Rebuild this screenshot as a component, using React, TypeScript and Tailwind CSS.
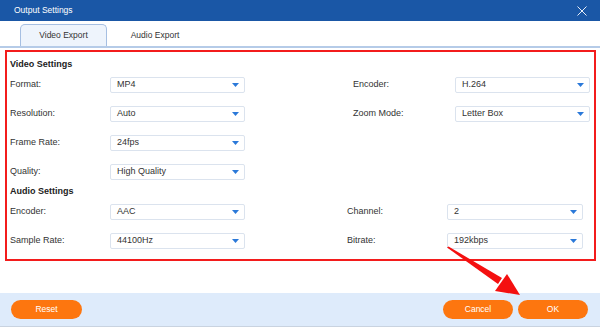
import React from "react";

const font = { fontFamily: '"Liberation Sans", Arial, sans-serif' };

function Select({ value, w }: { value: string; w: string }) {
  return (
    <div
      className={`${w} h-[16px] flex items-center justify-between bg-white border border-[#dbe3ee] rounded-[2px] pl-[6px] pr-[5px] text-[9px] text-[#333]`}
    >
      <span>{value}</span>
      <svg width="7" height="4" viewBox="0 0 7 4">
        <path d="M0 0 L7 0 L3.5 4 Z" fill="#2b79d9" />
      </svg>
    </div>
  );
}

function Label({ text, w }: { text: string; w: string }) {
  return <div className={`${w} text-[9px] text-[#333] shrink-0`}>{text}</div>;
}

export default function App() {
  return (
    <div className="relative w-[600px] h-[327px] flex flex-col bg-white overflow-hidden" style={font}>
      {/* Title bar */}
      <div className="h-[21px] bg-[#1a57a6] flex items-center justify-between pl-[14px] pr-[13px] shrink-0">
        <span className="text-white text-[8.5px]">Output Settings</span>
        <svg width="10" height="10" viewBox="0 0 10 10">
          <path d="M0.5 0.5 L9.5 9.5 M9.5 0.5 L0.5 9.5" stroke="#e8eef8" strokeWidth="1" />
        </svg>
      </div>
      {/* Tabs */}
      <div className="h-[27px] flex items-end pl-[20px] border-b-[2px] border-[#b5cbe8] shrink-0">
        <div className="w-[87px] h-[22px] bg-[#eef4fc] border border-b-0 border-[#a6bfe2] rounded-t-[5px] flex items-center justify-center text-[8.5px] text-[#333]">
          Video Export
        </div>
        <div className="w-[96px] h-[22px] flex items-center justify-center text-[8.5px] text-[#333]">
          Audio Export
        </div>
      </div>
      {/* Red box */}
      <div className="mt-[2px] ml-[5px] w-[591px] border-2 border-[#f31c1c] pl-[3px] pt-[7px] pb-[10px] flex flex-col">
        <div className="h-[12px] flex items-center text-[9px] font-bold text-[#222]">Video Settings</div>
        <div className="mt-[6px] flex flex-col gap-[13px]">
          <div className="h-[16px] flex items-center">
            <Label text="Format:" w="w-[100px]" />
            <Select value="MP4" w="w-[135px]" />
            <div className="w-[108px] shrink-0" />
            <Label text="Encoder:" w="w-[102px]" />
            <Select value="H.264" w="w-[135px]" />
          </div>
          <div className="h-[16px] flex items-center">
            <Label text="Resolution:" w="w-[100px]" />
            <Select value="Auto" w="w-[135px]" />
            <div className="w-[108px] shrink-0" />
            <Label text="Zoom Mode:" w="w-[102px]" />
            <Select value="Letter Box" w="w-[135px]" />
          </div>
          <div className="h-[16px] flex items-center">
            <Label text="Frame Rate:" w="w-[100px]" />
            <Select value="24fps" w="w-[135px]" />
          </div>
          <div className="h-[16px] flex items-center">
            <Label text="Quality:" w="w-[100px]" />
            <Select value="High Quality" w="w-[135px]" />
          </div>
        </div>
        <div className="mt-[6px] h-[12px] flex items-center text-[9px] font-bold text-[#222]">Audio Settings</div>
        <div className="mt-[6px] flex flex-col gap-[13px]">
          <div className="h-[16px] flex items-center">
            <Label text="Encoder:" w="w-[100px]" />
            <Select value="AAC" w="w-[135px]" />
            <div className="w-[102px] shrink-0" />
            <Label text="Channel:" w="w-[100px]" />
            <Select value="2" w="w-[136px]" />
          </div>
          <div className="h-[16px] flex items-center">
            <Label text="Sample Rate:" w="w-[100px]" />
            <Select value="44100Hz" w="w-[135px]" />
            <div className="w-[102px] shrink-0" />
            <Label text="Bitrate:" w="w-[100px]" />
            <Select value="192kbps" w="w-[136px]" />
          </div>
        </div>
      </div>
      <div className="flex-1" />
      {/* Footer */}
      <div className="h-[34px] bg-[#deebfb] border-b border-[#c9d3e0] flex items-center justify-between pl-[11px] pr-[12px] shrink-0">
        <button className="w-[71px] h-[19px] rounded-full bg-[#fd760f] text-white text-[8.5px]">Reset</button>
        <div className="flex gap-[5px]">
          <button className="w-[70px] h-[19px] rounded-full bg-[#fd760f] text-white text-[8.5px]">Cancel</button>
          <button className="w-[70px] h-[19px] rounded-full bg-[#fd760f] text-white text-[8.5px]">OK</button>
        </div>
      </div>
      {/* Annotation arrow */}
      <svg className="absolute left-0 top-0 pointer-events-none" width="600" height="327" viewBox="0 0 600 327">
        <polygon points="447,247.5 448.5,246.5 502,278 498,284" fill="#f41010" />
        <polygon points="520,295 495,291 507,274" fill="#f41010" />
      </svg>
    </div>
  );
}
